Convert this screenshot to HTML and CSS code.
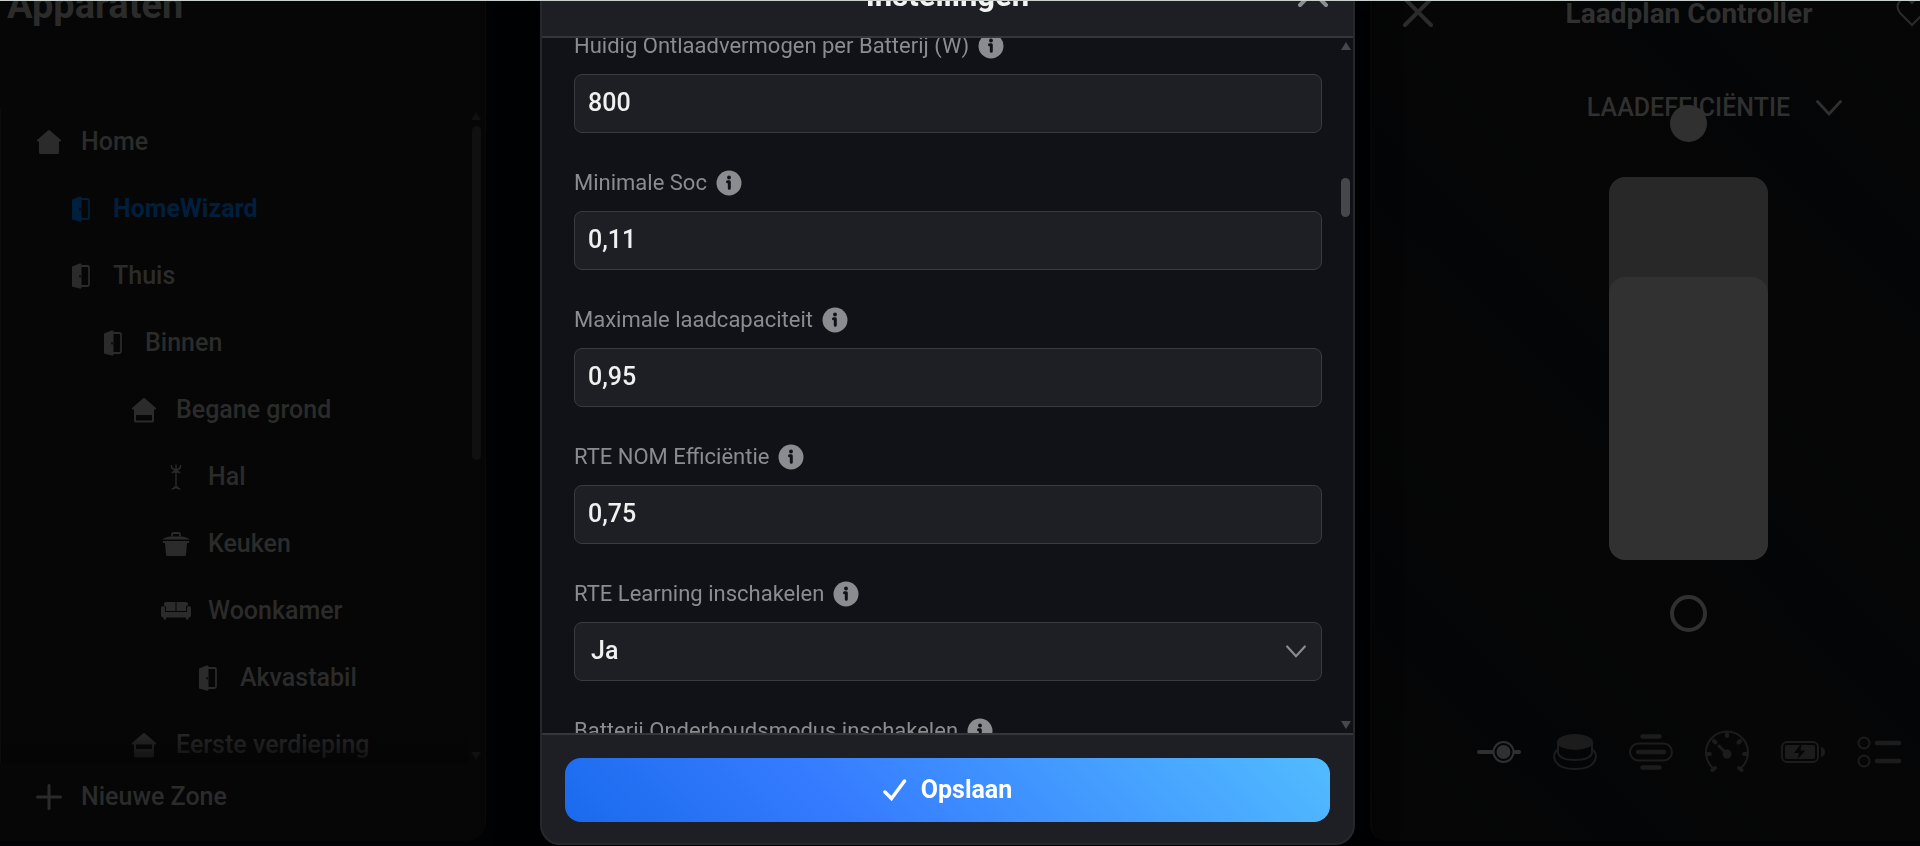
FILE: index.html
```html
<!DOCTYPE html>
<html lang="nl">
<head>
<meta charset="utf-8">
<title>Instellingen</title>
<link rel="stylesheet" href="styles.css">
</head>
<body>
<svg class="defs" aria-hidden="true">
  <symbol id="home" viewBox="0 0 26 26"><path d="M12 1.500Q13 .7 14 1.500L25 11Q25.500 12.500 24 12.500H23V23.500Q23 25 21.500 25H4.500Q3 25 3 23.500V12.500H2Q.5 12.500 1 11Z"/></symbol>
  <symbol id="door" viewBox="0 0 26 26"><path fill-rule="evenodd" d="M4 3.500L11.500 .5Q13.500 0 13.500 1.500V24.500Q13.500 26 11.500 25.500L4 23.500V3.500ZM12 12a.8 1.300 0 1 0 .1 0Z"/><path d="M13 3H19.500Q21 3 21 4.500V21.500Q21 23 19.500 23H13" fill="none" stroke="currentColor" stroke-width="1.800"/></symbol>
  <symbol id="floor0" viewBox="0 0 26 26"><path fill-rule="evenodd" d="M12 1.500Q13 .7 14 1.500L25 11Q25.500 12.500 24 12.500H23V23.500Q23 25.500 21.500 25.500H4.500Q3 25.500 3 23.500V12.500H2Q.5 12.500 1 11ZM5 18V23.500H21V18Z"/></symbol>
  <symbol id="floor1" viewBox="0 0 26 26"><path fill-rule="evenodd" d="M12 1.500Q13 .7 14 1.500L25 11Q25.500 12.500 24 12.500H23V23.500Q23 25.500 21.500 25.500H4.500Q3 25.500 3 23.500V12.500H2Q.5 12.500 1 11ZM5 12.500V17H21V12.500Z"/></symbol>
  <symbol id="rack" viewBox="0 0 26 28"><path d="M13 1V24M8 1.500Q8 6 13 6T18 1.500M9 9.500L13 6L17 9.500M9 9Q13 8 17 9M9 27Q13 24 17 27M11 25H15" fill="none" stroke="currentColor" stroke-width="1.500" stroke-linecap="round"/></symbol>
  <symbol id="pot" viewBox="0 0 26 26"><path d="M0 8Q2 6 8 5.500H18Q24 6 26 8V8.500H0ZM0 10H26V12H24L23 23.500Q22.800 25 21.500 25H4.500Q3.200 25 3 23.500L2 12H0Z"/><path d="M9 5.500V3.500Q9 2 10.500 2H15.500Q17 2 17 3.500V5.500" fill="none" stroke="currentColor" stroke-width="1.800"/></symbol>
  <symbol id="sofa" viewBox="0 0 32 26"><path d="M4 5.500Q4 4 6 4H15.500V13H6V9Q4 8 4 7ZM16.500 4H26Q28 4 28 5.500V7Q26 8 26 9V13H16.500ZM1 10Q1 8 3 8T5 10V14H27V10Q27 8 29 8T31 10V17Q31 19.500 28.500 19.500V21.500H26V19.500H6V21.500H3.500V19.500Q1 19.500 1 17Z"/></symbol>
  <symbol id="plus" viewBox="0 0 26 26"><path d="M13 1.500V24.500M1.500 13H24.500" fill="none" stroke="currentColor" stroke-width="3" stroke-linecap="round"/></symbol>
  <symbol id="cross" viewBox="0 0 32 32"><path d="M3 3L29 29M29 3L3 29" fill="none" stroke="currentColor" stroke-width="4" stroke-linecap="round"/></symbol>
  <symbol id="chevron" viewBox="0 0 26 16"><path d="M1.500 1.500L13 14L24.500 1.500" fill="none" stroke="currentColor" stroke-width="2.800" stroke-linecap="round"/></symbol>
  <symbol id="info" viewBox="0 0 26 26"><circle cx="13" cy="13" r="12.500"/><circle cx="13" cy="7.500" r="1.900" fill="#111217"/><path d="M11.500 11.800H13.300V18.300" fill="none" stroke="#111217" stroke-width="3" stroke-linecap="round" stroke-linejoin="round"/></symbol>
</svg>
<div class="app">
  <aside class="sidebar">
    <h2 class="sidebar-title">Apparaten</h2>
    <div class="zones">
      <ul class="zone-list">
        <li class="zone l0"><svg class="zi"><use href="#home"/></svg>Home</li>
        <li class="zone l1 active"><svg class="zi"><use href="#door"/></svg>HomeWizard</li>
        <li class="zone l1"><svg class="zi"><use href="#door"/></svg>Thuis</li>
        <li class="zone l2"><svg class="zi"><use href="#door"/></svg>Binnen</li>
        <li class="zone l3"><svg class="zi"><use href="#floor0"/></svg>Begane grond</li>
        <li class="zone l4"><svg class="zi"><use href="#rack"/></svg>Hal</li>
        <li class="zone l4"><svg class="zi"><use href="#pot"/></svg>Keuken</li>
        <li class="zone l4"><svg class="zi wide"><use href="#sofa"/></svg>Woonkamer</li>
        <li class="zone l5"><svg class="zi"><use href="#door"/></svg>Akvastabil</li>
        <li class="zone l3"><svg class="zi"><use href="#floor1"/></svg>Eerste verdieping</li>
      </ul>
      <div class="bar"><i class="up"></i><i class="thumb"></i><i class="down"></i></div>
    </div>
    <button class="zone new-zone l0"><svg class="zi"><use href="#plus"/></svg>Nieuwe Zone</button>
  </aside>

  <section class="device">
    <header class="device-head">
      <button class="icon-btn" aria-label="Sluiten"><svg class="x"><use href="#cross"/></svg></button>
      <h2 class="device-title">Laadplan Controller</h2>
      <svg class="heart" viewBox="0 0 32 30"><path d="M16 28L4 16Q-1 9 4 4Q10 -1 16 6Q22 -1 28 4Q33 9 28 16Z" fill="none" stroke="currentColor" stroke-width="2"/></svg>
    </header>
    <button class="picker">LAADEFFICIËNTIE<svg class="picker-chev"><use href="#chevron"/></svg></button>
    <div class="slider">
      <span class="dot"></span>
      <div class="track"><div class="fill"></div></div>
      <span class="ring"></span>
    </div>
    <nav class="tabs">
      <svg class="tab on" viewBox="0 0 44 44"><path d="M2 22H15M38 22H42" stroke="currentColor" stroke-width="4" stroke-linecap="round"/><circle cx="26.500" cy="22" r="10" fill="none" stroke="currentColor" stroke-width="2"/><circle cx="26.500" cy="22" r="7" fill="currentColor"/></svg>
      <svg class="tab" viewBox="0 0 44 44"><g fill="none" stroke="currentColor" stroke-width="2"><ellipse cx="22" cy="12" rx="17" ry="7" fill="currentColor"/><path d="M5 12V23Q7 30 22 30T39 23V12M5 19Q1 22 1 27Q3 39 22 39T43 27Q43 22 39 19"/></g></svg>
      <svg class="tab" viewBox="0 0 44 44"><path d="M13.500 6.500H30.500M13.500 37.500H30.500M9 22H35" stroke="currentColor" stroke-width="4.500" stroke-linecap="round"/><rect x="1" y="13.500" width="42" height="17" rx="8.500" fill="none" stroke="currentColor" stroke-width="2"/></svg>
      <svg class="tab" viewBox="0 0 44 44"><path d="M9 39A21 21 0 1 1 35 39" fill="none" stroke="currentColor" stroke-width="2"/><path d="M10 38L7.500 40M34 38L36.500 40M2 24H5M42 24H39M9 11L10.500 12.500M35 11L33.500 12.500M22 4V6" stroke="currentColor" stroke-width="4" stroke-linecap="round"/><circle cx="22" cy="24" r="4.500" fill="currentColor"/><path d="M14 16L22 24" stroke="currentColor" stroke-width="3" stroke-linecap="round"/></svg>
      <svg class="tab" viewBox="0 0 44 44"><rect x="1" y="12" width="36" height="20" rx="5" fill="none" stroke="currentColor" stroke-width="2"/><path fill="currentColor" fill-rule="evenodd" d="M6 15H32Q34 15 34 17V27Q34 29 32 29H6Q4 29 4 27V17Q4 15 6 15ZM19 15L13 23H18L16.500 29L24.500 20.500H19.500L20.500 15ZM40 17Q44 18 44 22T40 27Z"/></svg>
      <svg class="tab" viewBox="0 0 44 44"><g fill="none" stroke="currentColor"><circle cx="7" cy="13" r="5.500" stroke-width="2"/><circle cx="7" cy="31" r="5.500" stroke-width="2"/><path d="M20 13H42M20 31H42" stroke-width="4.500" stroke-linecap="round"/></g></svg>
    </nav>
  </section>
</div>

<div class="overlay">
  <form class="dialog" role="dialog" aria-label="Instellingen">
    <header class="dialog-head">
      <h1 class="dialog-title">Instellingen</h1>
      <button type="button" class="icon-btn close" aria-label="Sluiten"><svg class="x"><use href="#cross"/></svg></button>
    </header>
    <div class="dialog-body">
      <div class="fields">
        <div class="field"><label for="f1">Huidig Ontlaadvermogen per Batterij (W)<svg class="info"><use href="#info"/></svg></label><input id="f1" type="text" value="800"></div>
        <div class="field"><label for="f2">Minimale Soc<svg class="info"><use href="#info"/></svg></label><input id="f2" type="text" value="0,11"></div>
        <div class="field"><label for="f3">Maximale laadcapaciteit<svg class="info"><use href="#info"/></svg></label><input id="f3" type="text" value="0,95"></div>
        <div class="field"><label for="f4">RTE NOM Efficiëntie<svg class="info"><use href="#info"/></svg></label><input id="f4" type="text" value="0,75"></div>
        <div class="field"><label for="f5">RTE Learning inschakelen<svg class="info"><use href="#info"/></svg></label>
          <div class="select"><select id="f5"><option>Ja</option><option>Nee</option></select><svg class="select-chev"><use href="#chevron"/></svg></div></div>
        <div class="field"><label for="f6">Batterij Onderhoudsmodus inschakelen<svg class="info"><use href="#info"/></svg></label>
          <div class="select"><select id="f6"><option>Ja</option><option>Nee</option></select></div></div>
      </div>
      <div class="bar"><i class="up"></i><i class="thumb"></i><i class="down"></i></div>
    </div>
    <footer class="dialog-foot">
      <button type="submit" class="save"><svg class="check" viewBox="0 0 24 24"><path d="M2 14L8.500 20.500L21.500 3" fill="none" stroke="currentColor" stroke-width="3.500" stroke-linecap="round"/></svg>Opslaan</button>
    </footer>
  </form>
</div>
</body>
</html>
```
FILE: styles.css
```css
* { box-sizing: border-box; }
body {
  margin: 0;
  height: 100vh;
  overflow: hidden;
  border-top: 1px solid #c9d0cd;
  background: #010204;
  color: #2b2b2b;
  font: 500 25px/32px Roboto, sans-serif;
}
h1, h2, ul { margin: 0; padding: 0; list-style: none; }
button { border: 0; padding: 0; background: none; color: inherit; font: inherit; }
svg { flex: none; fill: currentColor; }
.defs { position: absolute; width: 0; height: 0; }

.app { display: flex; justify-content: space-between; height: 100%; }

/* zones */
.sidebar {
  display: flex;
  flex-direction: column;
  width: 486px;
  margin-bottom: 5px;
  padding-bottom: 11px;
  background: #060606;
  border-right: 1px solid #0a0a0a;
  border-radius: 0 0 20px 0;
}
.sidebar-title {
  height: 107px;
  padding-left: 7px;
  font-size: 38px;
  line-height: 8px;
  font-weight: 700;
}
.zones { position: relative; display: flex; flex: 1; min-height: 0; border-left: 1px solid #0c0c0c; }
.zone-list { display: flex; flex: 1; flex-direction: column; overflow: hidden; }
.zones::after {
  content: "";
  position: absolute;
  inset: auto 16px 0 0;
  height: 36px;
  background: linear-gradient(#06060600, #040404b0);
}
.zone { display: flex; flex: 0 0 67px; align-items: center; gap: 16px; }
.zi { width: 26px; height: 26px; margin: 0 3px; }
.zi.wide { width: 32px; margin: 0; }
.l0 { padding-left: 32px; }
.l1 { padding-left: 64px; }
.l2 { padding-left: 96px; }
.l3 { padding-left: 127px; }
.l4 { padding-left: 159px; }
.l5 { padding-left: 191px; }
.active { color: #001f3d; font-weight: 700; }
.new-zone { padding-left: 33px; }

/* scroll bars */
.bar { display: flex; flex-direction: column; align-items: center; }
.up, .down { border: 5px solid transparent; }
.up { border-top: 0; border-bottom: 8px solid; }
.down { border-bottom: 0; border-top: 8px solid; margin-top: auto; }
.thumb { width: 9px; border-radius: 5px; background: currentColor; }
.sidebar .bar { width: 18px; color: #101010; padding: 4px 0 3px; }
.sidebar .thumb { height: 334px; margin-top: 6px; }

/* device */
.device {
  display: flex;
  flex-direction: column;
  align-items: center;
  width: 550px;
  margin-bottom: 5px;
  overflow: hidden;
  border-left: 2px solid #0a0a0a;
  border-radius: 0 0 0 16px;
  background: repeating-linear-gradient(45deg, #060606 0 90px, #040507 180px, #060606 300px);
}
.device-head {
  display: grid;
  grid-template: 100% / 1fr auto 1fr;
  align-items: center;
  align-self: flex-start;
  width: 634px;
  height: 21px;
  padding: 0 30px;
}
.x { display: block; width: 32px; height: 32px; }
.device-title { padding-top: 4px; font-size: 28px; font-weight: 700; color: #303030; }
.heart { width: 32px; height: 30px; justify-self: end; margin-right: 48px; }
.icon-btn { justify-self: start; }
.picker {
  display: flex;
  align-items: center;
  gap: 26px;
  margin: 70px 0 0 137px;
  color: #303030;
}
.picker-chev { width: 26px; height: 16px; }
.slider { display: flex; flex-direction: column; align-items: center; margin: -19px 0 0 85px; }
.dot { width: 37px; height: 37px; border-radius: 50%; background: #303030; }
.track {
  display: flex;
  align-items: flex-end;
  width: 159px;
  height: 383px;
  margin: 35px 0;
  border-radius: 16px;
  background: #282828;
  overflow: hidden;
}
.fill { width: 100%; height: 74%; border-radius: 16px; background: #313131; }
.ring { width: 37px; height: 37px; border: 4px solid #303030; border-radius: 50%; }
.tabs { display: flex; align-self: flex-start; gap: 32px; margin: 98px 0 0 105px; color: #1c1c1c; }
.tab { width: 44px; height: 44px; }
.tab.on { color: #303030; }

/* settings dialog */
.overlay {
  position: fixed;
  inset: 1px 0 0;
  display: flex;
  justify-content: center;
  align-items: flex-end;
  padding: 0 25px 1px 0;
  overflow: hidden;
}
.dialog {
  display: flex;
  flex-direction: column;
  flex: none;
  width: 815px;
  height: calc(100% + 48px);
  border: 2px solid #27282c;
  border-radius: 20px;
  overflow: hidden;
  background: #1e1f24;
  box-shadow: 0 0 40px #000;
}
.dialog-head {
  display: grid;
  grid-template-columns: 1fr auto 1fr;
  align-items: center;
  flex: 0 0 83px;
  padding: 0 24px;
  border-bottom: 2px solid #35363a;
}
.dialog-title { grid-column: 2; font-size: 31px; font-weight: 700; color: #f2f2f2; }
.close { justify-self: end; padding-bottom: 8px; color: #8c8d91; }
.dialog-body { display: flex; flex: 1; min-height: 0; overflow: hidden; background: #111217; }
.fields { display: flex; flex: 1; flex-direction: column; padding-left: 32px; }
.field { flex: none; height: 137px; }
.field label {
  display: flex;
  align-items: center;
  gap: 9px;
  height: 36px;
  padding-bottom: 20px;
  font-size: 22px;
  font-weight: 400;
  color: #8b8c90;
}
.info { width: 26px; height: 26px; }
.field input, .field select {
  display: block;
  width: 100%;
  height: 59px;
  padding: 0 13px 2px;
  border: 1px solid #3a3b3f;
  border-radius: 8px;
  background: #1e1f24;
  color: #f0f0f1;
  font: inherit;
  appearance: none;
}
.field select { padding-left: 16px; }
.select { display: grid; align-items: center; }
.select > * { grid-area: 1 / 1; }
.select-chev { width: 20px; height: 13px; justify-self: end; margin-right: 16px; color: #8b8c90; }
.dialog-body .bar { width: 31px; padding: 4px 0 4px 16px; color: #46474b; }
.dialog-body .thumb { height: 39px; margin-top: 128px; }
.dialog-foot { padding: 23px 23px 21px; border-top: 2px solid #35363a; }
.save {
  display: flex;
  align-items: center;
  justify-content: center;
  gap: 14px;
  width: 100%;
  height: 64px;
  border-radius: 16px;
  background: linear-gradient(45deg, #1a6aed, #357bff 35%, #52bcff);
  color: #fff;
  font-weight: 700;
}
.check { width: 24px; height: 24px; }
```
